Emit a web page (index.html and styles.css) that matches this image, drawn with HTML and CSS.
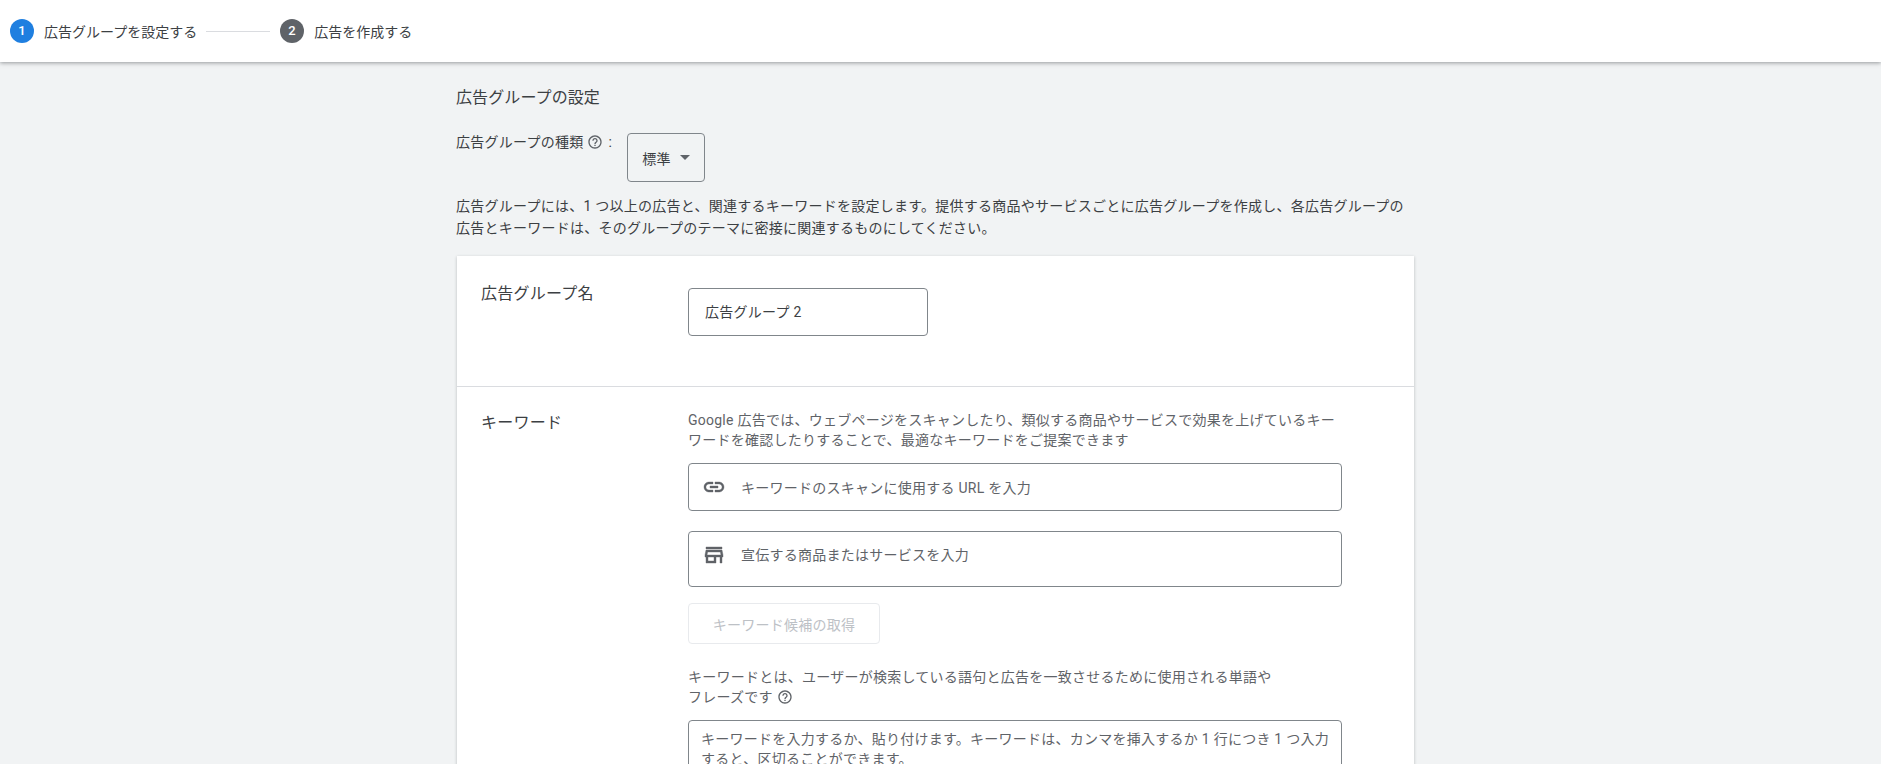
FILE: index.html
```html
<!DOCTYPE html>
<html lang="ja">
  <head>
    <meta charset="UTF-8" />
    <title>広告グループの設定</title>
    <link rel="stylesheet" href="styles.css">
  </head>

  <body>
    <header class="stepper">
      <div class="step-num step-active">1</div>
      <div class="step-label">広告グループを設定する</div>
      <div class="step-line"></div>
      <div class="step-num">2</div>
      <div class="step-label">広告を作成する</div>
    </header>

    <main class="content">
      <h2 class="title">広告グループの設定</h2>

      <div class="type-row">
        <div class="type-label">
          広告グループの種類
          <svg class="help" viewBox="0 0 24 24"><path d="M11 18h2v-2h-2v2zm1-16C6.48 2 2 6.48 2 12s4.48 10 10 10 10-4.48 10-10S17.52 2 12 2zm0 18c-4.41 0-8-3.59-8-8s3.59-8 8-8 8 3.59 8 8-3.59 8-8 8zm0-14c-2.21 0-4 1.79-4 4h2c0-1.1.9-2 2-2s2 .9 2 2c0 2-3 1.75-3 5h2c0-2.25 3-2.5 3-5 0-2.21-1.79-4-4-4z"/></svg>
          <span class="colon">:</span>
        </div>
        <div class="select">標準<span class="caret"></span></div>
      </div>

      <p class="desc">広告グループには、1 つ以上の広告と、関連するキーワードを設定します。提供する商品やサービスごとに広告グループを作成し、各広告グループの<br>広告とキーワードは、そのグループのテーマに密接に関連するものにしてください。</p>

      <section class="card">
        <div class="card-row row-name">
          <div class="row-title">広告グループ名</div>
          <div class="name-input">広告グループ 2</div>
        </div>

        <div class="card-row row-keyword">
          <div class="row-title">キーワード</div>
          <div class="keyword-body">
            <p class="hint">Google 広告では、ウェブページをスキャンしたり、類似する商品やサービスで効果を上げているキー<br>ワードを確認したりすることで、最適なキーワードをご提案できます</p>

            <div class="field field-url">
              <svg class="field-icon" viewBox="0 0 24 24"><path d="M3.9 12c0-1.71 1.39-3.1 3.1-3.1h4V7H7c-2.76 0-5 2.24-5 5s2.24 5 5 5h4v-1.9H7c-1.71 0-3.1-1.39-3.1-3.1zM8 13h8v-2H8v2zm9-6h-4v1.9h4c1.71 0 3.1 1.39 3.1 3.1s-1.39 3.1-3.1 3.1h-4V17h4c2.76 0 5-2.24 5-5s-2.24-5-5-5z"/></svg>
              キーワードのスキャンに使用する URL を入力
            </div>

            <div class="field field-product">
              <svg class="field-icon" viewBox="0 0 24 24"><path d="M20 4H4v2h16V4zm1 10v-2l-1-5H4l-1 5v2h1v6h10v-6h4v6h2v-6h1zm-9 4H6v-4h6v4zm-6.96-6l.6-3h12.72l.6 3H5.04z"/></svg>
              宣伝する商品またはサービスを入力
            </div>

            <button class="get-btn" disabled>キーワード候補の取得</button>

            <p class="hint hint-about">キーワードとは、ユーザーが検索している語句と広告を一致させるために使用される単語や<br>フレーズです<svg class="help" viewBox="0 0 24 24"><path d="M11 18h2v-2h-2v2zm1-16C6.48 2 2 6.48 2 12s4.48 10 10 10 10-4.48 10-10S17.52 2 12 2zm0 18c-4.41 0-8-3.59-8-8s3.59-8 8-8 8 3.59 8 8-3.59 8-8 8zm0-14c-2.21 0-4 1.79-4 4h2c0-1.1.9-2 2-2s2 .9 2 2c0 2-3 1.75-3 5h2c0-2.25 3-2.5 3-5 0-2.21-1.79-4-4-4z"/></svg></p>

            <div class="keyword-box">キーワードを入力するか、貼り付けます。キーワードは、カンマを挿入するか 1 行につき 1 つ入力すると、区切ることができます。</div>
          </div>
        </div>
      </section>
    </main>
  </body>
</html>
```

FILE: styles.css
```css
html,
body {
  height: 100%;
  overflow: hidden;
}

body {
  margin: 0;
  font-family: Roboto, "Noto Sans CJK JP", sans-serif;
  font-size: 14px;
  letter-spacing: 0.25px;
  background-color: #f1f3f4;
  color: #3c4043;
}

/* top stepper */
.stepper {
  display: flex;
  align-items: center;
  height: 62px;
  padding: 0 0 0 10px;
  background-color: #fff;
  box-shadow: 0 1px 4px rgba(60, 64, 67, 0.5);
}

.step-num {
  width: 24px;
  height: 24px;
  border-radius: 50%;
  background-color: #5f6368;
  color: #fff;
  font-size: 13px;
  font-weight: 500;
  line-height: 24px;
  text-align: center;
}

.step-active {
  background-color: #1f7fe0;
}

.step-label {
  margin-left: 10px;
  color: #3c4043;
  letter-spacing: 0;
}

.step-line {
  width: 64px;
  height: 1px;
  margin: 0 10px 0 9px;
  background-color: #dadce0;
}

/* main column */
.content {
  width: 958px;
  margin-left: 456px;
  padding-top: 25px;
}

.title {
  margin: 0;
  font-size: 16px;
  font-weight: 400;
  letter-spacing: 0.1px;
  line-height: 22px;
}

.type-row {
  display: flex;
  margin-top: 24px;
}

.type-label {
  display: flex;
  align-items: flex-start;
  height: 20px;
  line-height: 20px;
  margin-top: -1px;
}

.help {
  width: 16px;
  height: 16px;
  margin-left: 4px;
  fill: #5f6368;
  vertical-align: -3px;
}

.type-label .help {
  margin-top: 2px;
}

.colon {
  margin-left: 5px;
}

.select {
  display: flex;
  align-items: center;
  justify-content: center;
  width: 78px;
  height: 49px;
  margin-left: 15px;
  box-sizing: border-box;
  border: 1px solid #80868b;
  border-radius: 4px;
}

.caret {
  margin-left: 9px;
  border-top: 5px solid #5f6368;
  border-left: 5px solid transparent;
  border-right: 5px solid transparent;
}

.desc {
  margin: 13px 0 0;
  line-height: 22px;
  white-space: nowrap;
}

/* card */
.card {
  margin-top: 17px;
  margin-left: 1px;
  background-color: #fff;
  box-shadow: 0 1px 3px rgba(60, 64, 67, 0.3);
}

.card-row {
  display: flex;
  padding-left: 24px;
}

.row-name {
  height: 131px;
  padding-top: 32px;
  box-sizing: border-box;
  border-bottom: 1px solid #dadce0;
}

.row-title {
  width: 207px;
  font-size: 16px;
  line-height: 22px;
  flex-shrink: 0;
}

.row-name .row-title {
  margin-top: -5px;
}

.row-keyword .row-title {
  margin-top: 2px;
}

.name-input {
  width: 240px;
  height: 48px;
  box-sizing: border-box;
  padding-left: 16px;
  border: 1px solid #80868b;
  border-radius: 4px;
  line-height: 46px;
}

.row-keyword {
  padding-top: 23px;
}

.keyword-body {
  width: 654px;
}

.hint {
  margin: 0;
  color: #5f6368;
  line-height: 20px;
  white-space: nowrap;
}

.field {
  display: flex;
  align-items: center;
  box-sizing: border-box;
  padding-left: 13px;
  border: 1px solid #80868b;
  border-radius: 4px;
  color: #5f6368;
}

.field-url {
  height: 48px;
  margin-top: 13px;
}

.field-product {
  align-items: flex-start;
  height: 56px;
  margin-top: 20px;
  padding-top: 12px;
  line-height: 22px;
}

.field-icon {
  width: 24px;
  height: 24px;
  margin-right: 15px;
  fill: #5f6368;
  stroke: #5f6368;
  stroke-width: 0.4;
  flex-shrink: 0;
}

.field-product .field-icon {
  margin-top: -1px;
}

.get-btn {
  display: block;
  width: 192px;
  height: 41px;
  margin-top: 16px;
  background-color: #fff;
  border: 1px solid #e8eaed;
  border-radius: 4px;
  color: #bdc1c6;
  font: inherit;
  letter-spacing: 0.25px;
}

.hint-about {
  margin-top: 23px;
}

.keyword-box {
  height: 80px;
  margin-top: 13px;
  box-sizing: border-box;
  padding: 8px 12px;
  border: 1px solid #80868b;
  border-radius: 4px;
  color: #5f6368;
  line-height: 20px;
}
```
